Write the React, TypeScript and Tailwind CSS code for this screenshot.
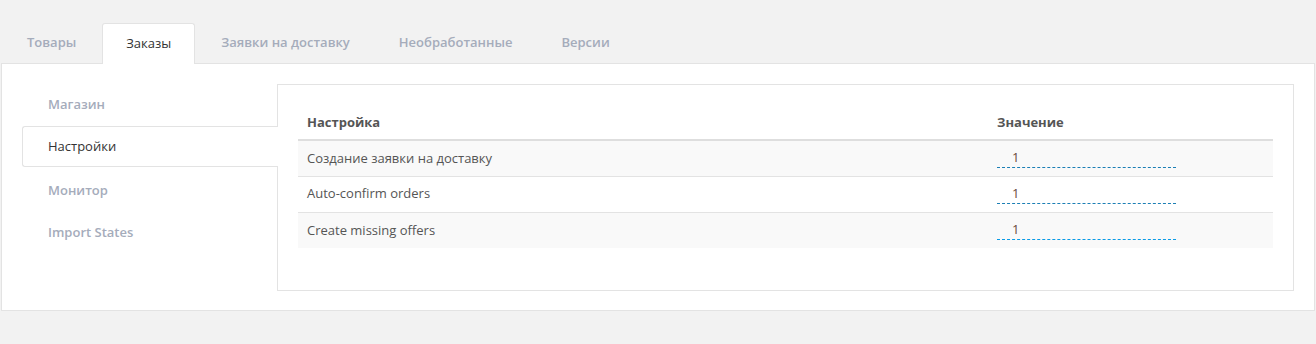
const tabs = ['Товары', 'Заказы', 'Заявки на доставку', 'Необработанные', 'Версии']
const nav = ['Магазин', 'Настройки', 'Монитор', 'Import States']
const rows = [
  { name: 'Создание заявки на доставку', value: '1' },
  { name: 'Auto-confirm orders', value: '1' },
  { name: 'Create missing offers', value: '1' },
]

export default function App() {
  return (
    <div className="min-h-[344px] bg-[#f2f2f2] pt-[23px] text-[13px] text-[#555] [font-family:'Open_Sans',sans-serif]">
      {/* top tabs */}
      <div className="flex gap-[3px] pl-[4px]">
        {tabs.map((t) => {
          const active = t === 'Заказы'
          return active ? (
            <div
              key={t}
              className="relative z-10 -mb-px flex h-[41px] items-center rounded-t-[3px] border border-b-0 border-[#e3e3e3] bg-white px-[23px] text-[#333]"
            >
              {t}
            </div>
          ) : (
            <div key={t} className="flex h-[40px] items-center px-[23px] font-semibold text-[#a5acbb]">
              {t}
            </div>
          )
        })}
      </div>

      <div className="mx-px flex border border-[#e3e3e3] bg-white p-[20px] pb-[19px]">
        {/* side nav */}
        <div className="w-[255px] shrink-0">
          {nav.map((n) => {
            const active = n === 'Настройки'
            return active ? (
              <div
                key={n}
                className="relative z-10 -mr-px mb-[3px] flex h-[41px] items-center rounded-l-[3px] border border-r-0 border-[#e3e3e3] bg-white pl-[25px] text-[#333]"
              >
                {n}
              </div>
            ) : (
              <div key={n} className="flex h-[42px] items-center pl-[26px] font-semibold text-[#a5acbb]">
                {n}
              </div>
            )
          })}
        </div>

        {/* settings panel */}
        <div className="min-h-[207px] flex-1 border border-[#e3e3e3] px-[20px] pb-[40px] pt-[20px]">
          <table className="w-full border-collapse">
            <thead>
              <tr className="border-b-2 border-[#dedede]">
                <th className="h-[35px] w-[690px] px-[9px] pt-[2px] text-left font-bold">Настройка</th>
                <th className="px-[9px] pt-[2px] text-left font-bold">Значение</th>
              </tr>
            </thead>
            <tbody>
              {rows.map((r, i) => (
                <tr key={r.name} className={`border-t border-[#e3e3e3] ${i % 2 === 0 ? 'bg-[#f9f9f9]' : 'bg-white'}`}>
                  <td className="h-[36px] px-[9px]">{r.name}</td>
                  <td className="px-[9px]">
                    <div
                      className={`mb-[2px] w-[179px] border-b border-dashed pl-[15px] leading-[20px] text-[#6b4a3c] ${
                        i === 2 ? 'border-[#0a9be6]' : 'border-[#1c7fb5]'
                      }`}
                    >
                      {r.value}
                    </div>
                  </td>
                </tr>
              ))}
            </tbody>
          </table>
        </div>
      </div>
    </div>
  )
}
